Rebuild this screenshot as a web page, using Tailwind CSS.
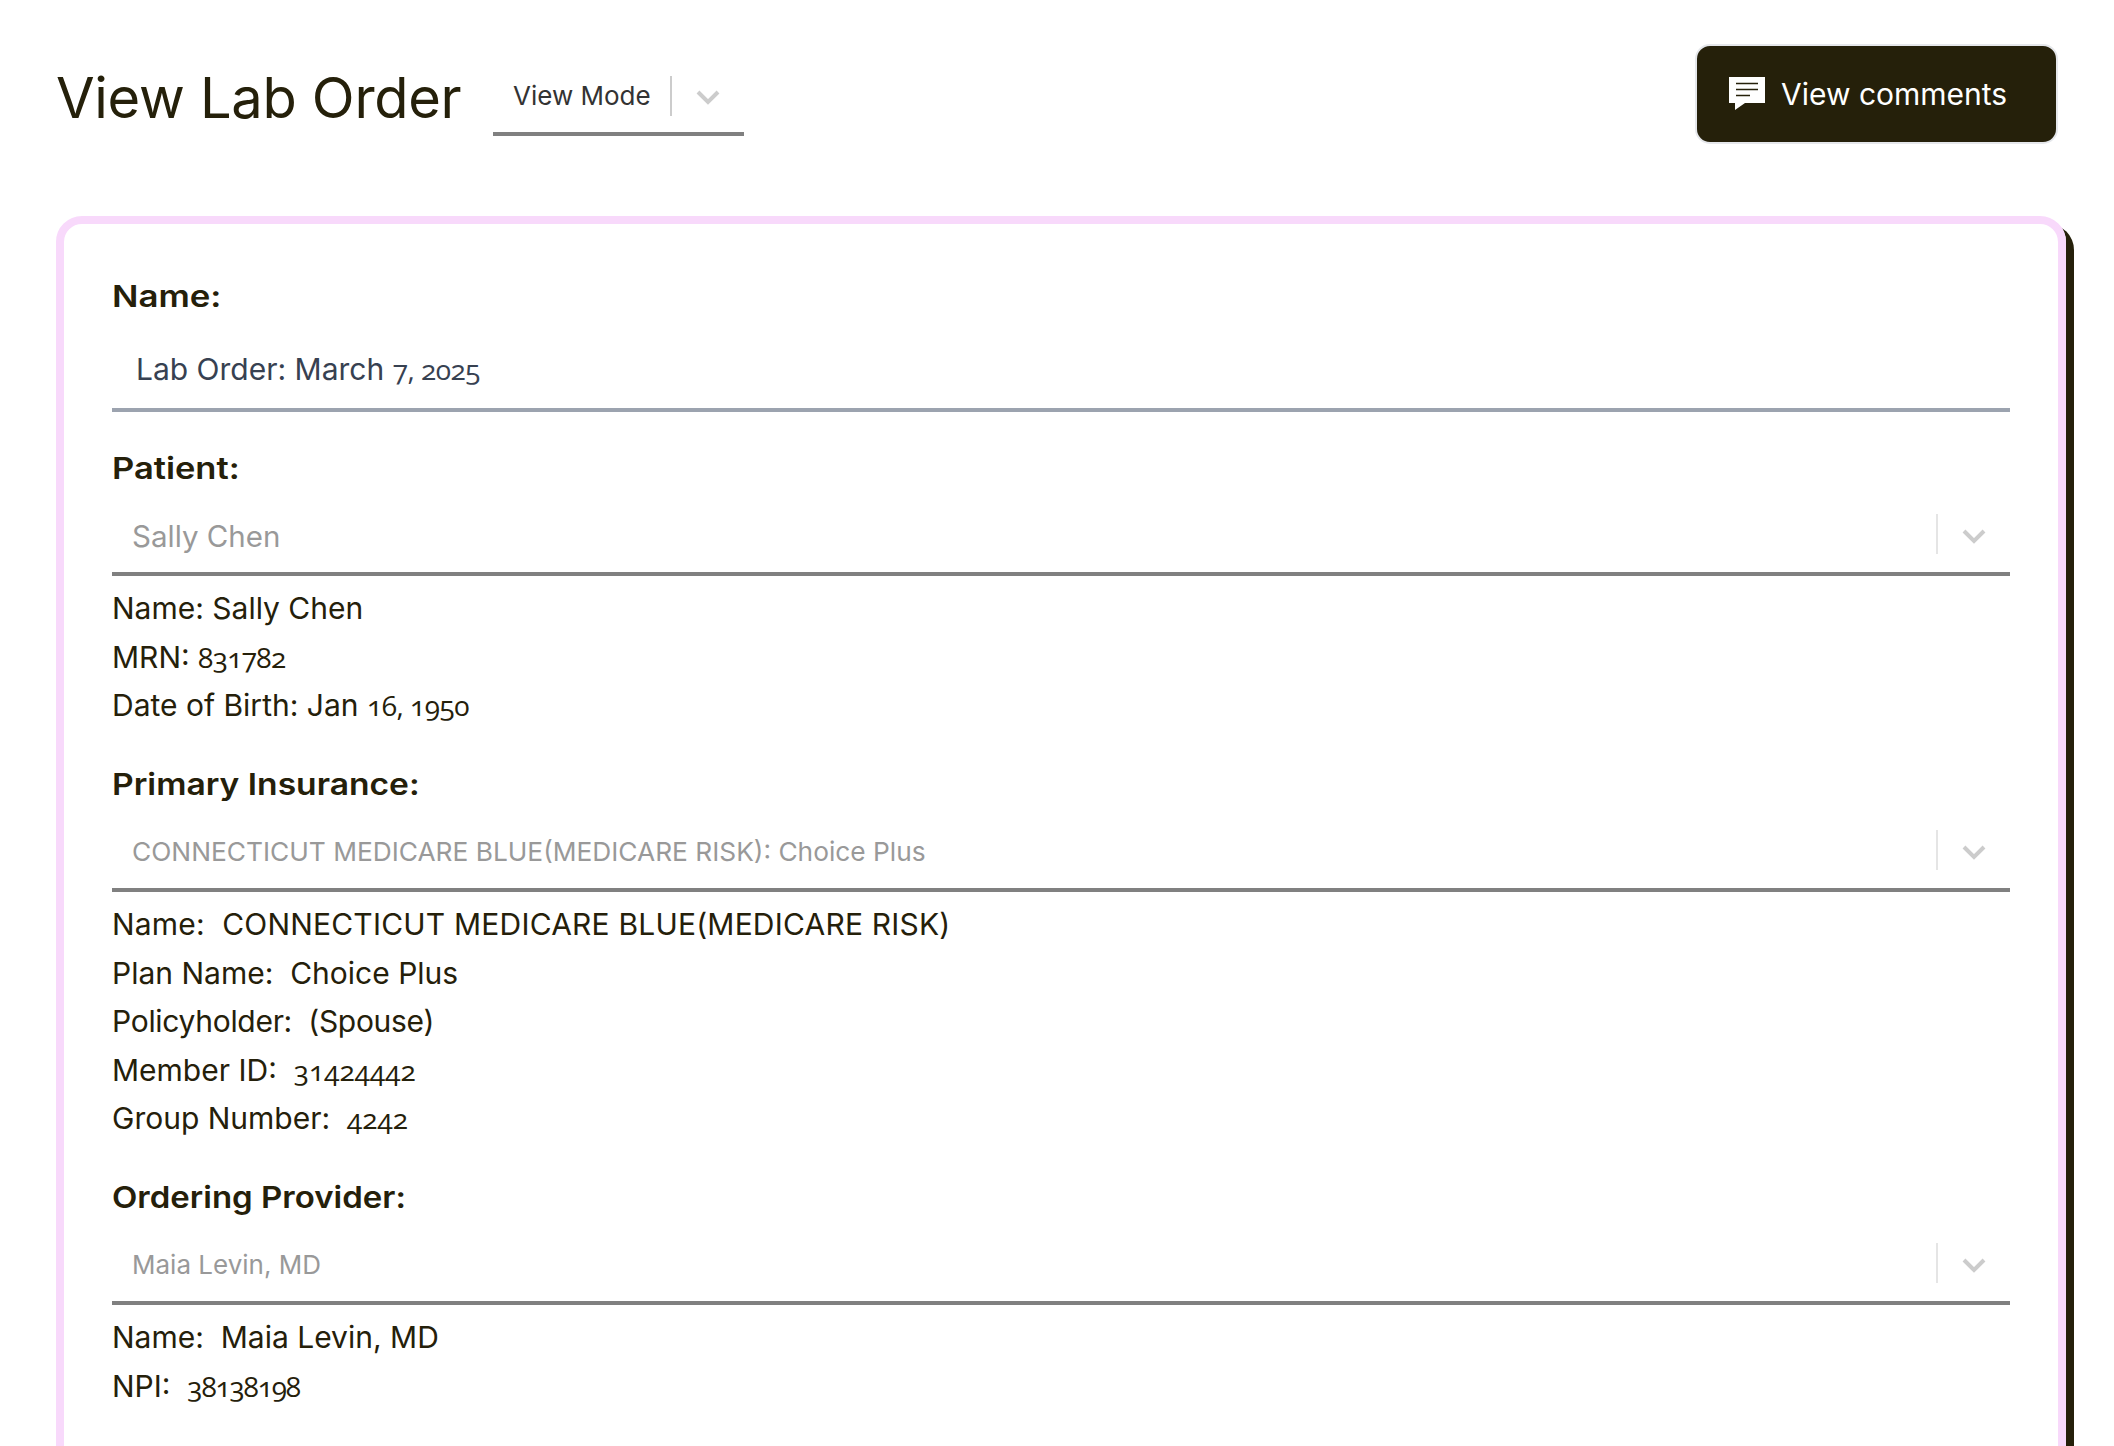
<!DOCTYPE html>
<html>
<head>
<meta charset="utf-8">
<script src="https://cdn.jsdelivr.net/npm/@tailwindcss/browser@4"></script>
</head>
<body class="bg-white h-screen overflow-hidden font-['Inter',sans-serif] text-[#25200a]">
<header class="h-[216px] pl-14 pr-[56px] pt-[44px] flex justify-between items-start">
  <div class="flex items-start">
    <h1 class="w-[437px] text-[56px] leading-[56px] mt-[26px] font-normal tracking-[-0.3px]">View Lab Order</h1>
    <div class="mt-[22px] w-[251px] h-[70px] border-b-4 border-[#808080] flex items-start pl-5 text-[26px] leading-[40px] text-[#333]">
      <span class="mt-[10px] w-[157px]">View Mode</span>
      <span class="w-[2px] h-10 mt-[10px] bg-[#ccc]"></span>
      <svg class="ml-[24px] mt-[24px] w-6 h-[15px]" viewBox="0 0 24 15" fill="none" stroke="#ccc" stroke-width="4"><path d="M2 2L12 12L22 2"/></svg>
    </div>
  </div>
  <button class="w-[363px] h-[100px] rounded-[15px] border-2 border-[#e5e7eb] bg-[#25200a] text-white flex items-center pl-[32px] text-[30px]">
    <svg class="w-9 h-[33px] mt-[-2px]" viewBox="0 0 36 33"><path fill="#fff" d="M0 0H36V26H16L6 33V26H0Z"/><path stroke="#25200a" stroke-width="1.6" d="M7 6.5H29M7 12.5H29M7 18.5H21"/></svg>
    <span class="ml-[16px]">View comments</span>
  </button>
</header>
<main class="mx-14 w-[2010px] border-8 border-[#f8d9fb] rounded-[26px] shadow-[8px_8px_0_#25200a] p-12 pb-[200px] text-[30px] leading-[48.5px]">
  <section>
    <h2 class="w-fit h-[68px] text-[30px] leading-[48px] font-semibold origin-left scale-x-[1.16]">Name:</h2>
    <div class="h-[72px] border-b-4 border-[#9ca3af] pl-6 pb-[10px] flex items-center text-[#374151] text-[30px]"><span>Lab Order: March <span class="font-['Open_Sans'] oldstyle-nums text-[28px] leading-none tracking-[-0.5px]">7, 2025</span></span></div>
  </section>
  <section class="mt-8">
    <h2 class="w-fit h-[52px] text-[30px] leading-[48px] font-semibold origin-left scale-x-[1.15]">Patient:</h2>
    <div class="h-[80px] border-b-4 border-[#808080] pl-5 pt-[5px] flex items-center justify-between text-[#999] text-[29.5px]">
      <span>Sally Chen</span>
      <div class="flex items-center pr-6"><span class="w-[2px] h-10 bg-[#e5e5e5] -mt-[5px]"></span><svg class="ml-6 w-6 h-[15px]" viewBox="0 0 24 15" fill="none" stroke="#ccc" stroke-width="4"><path d="M2 2L12 12L22 2"/></svg></div>
    </div>
    <div class="mt-[8px]">
      <p>Name: Sally Chen</p>
      <p>MRN: <span class="font-['Open_Sans'] oldstyle-nums text-[28px] leading-none tracking-[-0.7px]">831782</span></p>
      <p>Date of Birth: Jan <span class="font-['Open_Sans'] oldstyle-nums text-[28px] leading-none tracking-[-0.5px]">16, 1950</span></p>
    </div>
  </section>
  <section class="mt-[30.5px]">
    <h2 class="w-fit h-[52px] text-[30px] leading-[48px] font-semibold origin-left scale-x-[1.12]">Primary Insurance:</h2>
    <div class="h-[80px] border-b-4 border-[#808080] pl-5 pt-[5px] flex items-center justify-between text-[#999] text-[26.3px]">
      <span>CONNECTICUT MEDICARE BLUE(MEDICARE RISK): Choice Plus</span>
      <div class="flex items-center pr-6"><span class="w-[2px] h-10 bg-[#e5e5e5] -mt-[5px]"></span><svg class="ml-6 w-6 h-[15px]" viewBox="0 0 24 15" fill="none" stroke="#ccc" stroke-width="4"><path d="M2 2L12 12L22 2"/></svg></div>
    </div>
    <div class="mt-[8px]">
      <p class="tracking-[0.2px]">Name:&nbsp; CONNECTICUT MEDICARE BLUE(MEDICARE RISK)</p>
      <p>Plan Name:&nbsp; Choice Plus</p>
      <p class="tracking-[-0.3px]">Policyholder:&nbsp; (Spouse)</p>
      <p>Member ID:&nbsp; <span class="font-['Open_Sans'] oldstyle-nums text-[28px] leading-none">31424442</span></p>
      <p>Group Number:&nbsp; <span class="font-['Open_Sans'] oldstyle-nums text-[28px] leading-none">4242</span></p>
    </div>
  </section>
  <section class="mt-[30.5px]">
    <h2 class="w-fit h-[52px] text-[30px] leading-[48px] font-semibold origin-left scale-x-[1.1]">Ordering Provider:</h2>
    <div class="h-[80px] border-b-4 border-[#808080] pl-5 pt-[5px] flex items-center justify-between text-[#999] text-[26px]">
      <span>Maia Levin, MD</span>
      <div class="flex items-center pr-6"><span class="w-[2px] h-10 bg-[#e5e5e5] -mt-[5px]"></span><svg class="ml-6 w-6 h-[15px]" viewBox="0 0 24 15" fill="none" stroke="#ccc" stroke-width="4"><path d="M2 2L12 12L22 2"/></svg></div>
    </div>
    <div class="mt-[8px]">
      <p>Name:&nbsp; Maia Levin, MD</p>
      <p>NPI:&nbsp; <span class="font-['Open_Sans'] oldstyle-nums text-[28px] leading-none tracking-[-1.2px]">38138198</span></p>
    </div>
  </section>
</main>
</body>
</html>
